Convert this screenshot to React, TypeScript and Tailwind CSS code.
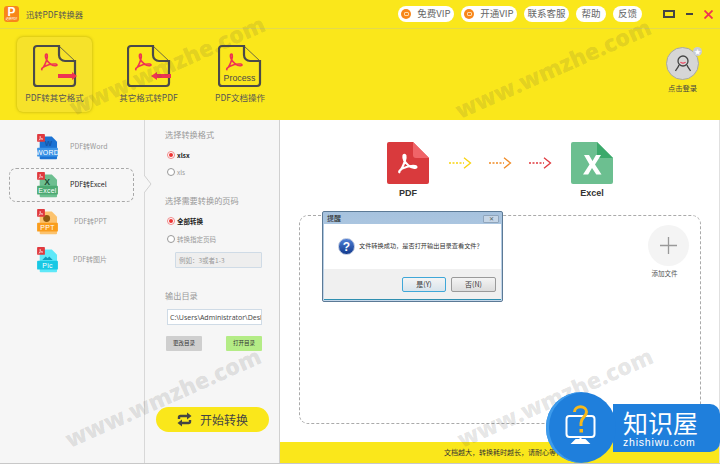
import type { ReactNode } from "react";

const font = { fontFamily: '"Noto Sans CJK SC", "Liberation Sans", sans-serif' };
const latin = { fontFamily: '"Liberation Sans", sans-serif' };

const acrobat =
  "M4 20.5c1.500-1 3.500-4.500 5-9 .7-2.200 1-4 .6-5.500-.3-1-1.600-1-1.800.2-.4 2.600 1.600 6.400 4.400 8.800 2 1.700 5 2.900 7 2.300 1-.3.7-1.500-.5-1.600-3-.3-8 .5-11.500 2.200-2.200 1.100-3.900 3-3.200 3.600z";

function AcrobatMark({ x, y, size, color, width = 2 }: { x: number; y: number; size: number; color: string; width?: number }) {
  return (
    <g transform={`translate(${x} ${y}) scale(${size / 24})`}>
      <path d={acrobat} fill="none" stroke={color} strokeWidth={width} strokeLinejoin="round" />
    </g>
  );
}

function ToolIcon({ kind }: { kind: "out" | "in" | "process" }) {
  return (
    <svg width="44" height="44" viewBox="0 0 44 44" className="block">
      <path d="M26 2H4a3 3 0 0 0-3 3v34a3 3 0 0 0 3 3h35a3 3 0 0 0 3-3V17H32a6 6 0 0 1-6-6z" fill="none" stroke="#4a4a4a" strokeWidth="2.200" />
      <path d="M26 2l16 15" fill="none" stroke="#4a4a4a" strokeWidth="0.800" />
      <AcrobatMark x={5} y={5} size={23} color="#ef3352" width={1.700} />
      {kind === "out" && <path d="M25 30h14v-2l5 4-5 4v-2H25z" fill="#ef3352" />}
      {kind === "in" && <path d="M44 30H30v-2l-6 4 6 4v-2h14z" fill="#ef3352" />}
      {kind === "process" && (
        <text x="21.500" y="37" textAnchor="middle" fontSize="8.800" fill="#4a4a4a" fontFamily="Liberation Sans, sans-serif">
          Process
        </text>
      )}
    </svg>
  );
}

function Pill({ children, vip, width }: { children: ReactNode; vip?: boolean; width: string }) {
  return (
    <div className={`flex h-4 items-center justify-center rounded-full bg-white text-[9.500px] leading-none text-[#666] ${width}`}>
      {vip && (
        <span className="mr-[6px] flex h-[10px] w-[10px] items-center justify-center rounded-full bg-[#f8861a]">
          <span className="h-[4px] w-[5px] rounded-[1px] border border-[#ffd9a8]" />
        </span>
      )}
      {children}
    </div>
  );
}

function FormatIcon({ color, light, label, glyph }: { color: string; light: string; label: string; glyph: ReactNode }) {
  return (
    <svg width="23" height="26" viewBox="0 0 26 30" className="block">
      <path d="M4 3h14l6 6v19a1 1 0 0 1-1 1H5a1 1 0 0 1-1-1z" fill={light} />
      {glyph}
      <rect x="1" y="16" width="24" height="10" rx="1" fill={color} />
      <text x="13" y="24.500" textAnchor="middle" fontSize="8" fill="#fff" fontFamily="Liberation Sans, sans-serif" letterSpacing="0.300">
        {label}
      </text>
      <rect x="1" y="0" width="9" height="9" rx="1" fill="#e0393e" />
      <AcrobatMark x={2} y={1} size={7} color="#fff" width={2} />
    </svg>
  );
}

function FormatRow({ label, active, left, icon }: { label: string; active?: boolean; left: string; icon: ReactNode }) {
  return (
    <div className="relative h-[33px]">
      {active && <div className="absolute left-[9px] top-[-1px] h-[34px] w-[125px] rounded-[7px] border border-dashed border-[#a8a8a8]" />}
      <div className="absolute left-[36px] top-[3px]">{icon}</div>
      <span className={`absolute top-[11px] text-[7px] leading-[9px] whitespace-nowrap ${active ? "text-[#222]" : "text-[#999]"} ${left}`}>{label}</span>
    </div>
  );
}

function Radio({ on, label, bold }: { on?: boolean; label: string; bold?: boolean }) {
  return (
    <div className="flex items-center gap-[2px]">
      <span className={`flex h-[8px] w-[8px] items-center justify-center rounded-full border ${on ? "border-[#f08a8a]" : "border-[#999]"} bg-white`}>
        {on && <span className="h-[4px] w-[4px] rounded-full bg-[#e33]" />}
      </span>
      <span className={`text-[6.500px] leading-none ${bold ? "font-bold text-[#222]" : "text-[#999]"}`}>{label}</span>
    </div>
  );
}

function Arrow({ color }: { color: string }) {
  return (
    <svg width="23" height="12" viewBox="0 0 23 12" className="block">
      <path d="M0 6h15" stroke={color} strokeWidth="1.300" strokeDasharray="2 1.500" fill="none" />
      <path d="M15 .8 21.500 6 15 11.200" stroke={color} strokeWidth="1.300" fill="none" />
    </svg>
  );
}

function Watermark({ className }: { className: string }) {
  return (
    <div
      className={`pointer-events-none absolute z-30 w-[226px] -rotate-[24deg] text-center text-[23px] leading-none font-extrabold whitespace-nowrap text-[#444]/15 ${className}`}
      style={{ fontFamily: '"Open Sans", sans-serif' }}
    >
      www.wmzhe.com
    </div>
  );
}

function Dialog() {
  return (
    <div className="absolute left-[322px] top-[211px] z-20 flex h-[91px] w-[181px] flex-col rounded-[2px] border border-[#5c7a96] bg-gradient-to-b from-[#a6c2de] to-[#c6d8ea] px-[1px] pb-[1px]">
      <div className="flex h-[12px] shrink-0 items-center justify-between pl-[3px] pr-[2px]">
        <span className="text-[7px] leading-none text-[#222]">提醒</span>
        <span className="mt-[1px] flex h-[8px] w-[16px] items-center justify-center rounded-[1px] border border-[#8fa5bc] bg-[#c5d5e6] text-[6px] leading-none text-[#566]">✕</span>
      </div>
      <div className="flex flex-1 flex-col border-b border-[#2f8fb0] bg-white">
        <div className="flex flex-1 items-center gap-[4px] pl-[14px]">
          <span className="flex h-[17px] w-[17px] items-center justify-center rounded-full border border-[#b8c4dc] bg-gradient-to-b from-[#4f7fd6] to-[#123a8e] text-[12px] leading-none font-bold text-white" style={latin}>?</span>
          <span className="text-[6.200px] leading-none whitespace-nowrap text-[#333]">文件转换成功，是否打开输出目录查看文件？</span>
        </div>
        <div className="flex h-[30px] items-center justify-end gap-[5px] bg-[#f0f0f0] pr-[5px]">
          <span className="flex h-[15px] w-[44px] items-center justify-center rounded-[2px] border border-[#3fa7d8] bg-gradient-to-b from-[#f4f4f4] to-[#d8e4ec] text-[7px] leading-none text-[#333]">是(Y)</span>
          <span className="flex h-[15px] w-[45px] items-center justify-center rounded-[2px] border border-[#9a9a9a] bg-gradient-to-b from-[#f4f4f4] to-[#dcdcdc] text-[7px] leading-none text-[#333]">否(N)</span>
        </div>
      </div>
    </div>
  );
}

export default function App() {
  return (
    <div className="relative flex h-[464px] w-[720px] flex-col overflow-hidden bg-white" style={font}>
      <header className="flex h-[120px] shrink-0 flex-col bg-[#fae71b]">
        <div className="flex h-[29px] shrink-0 items-center border-b border-[#e3d94e] pl-[4px] pr-[7px]">
          <div className="flex h-[16px] w-[15px] flex-col items-center rounded-[3px] bg-[#f8861a]">
            <span className="h-[12px] text-[12px] leading-[12px] font-bold text-white" style={latin}>P</span>
            <span className="text-[3px] leading-[3px] whitespace-nowrap text-white">迅转PDF</span>
          </div>
          <span className="ml-[7px] text-[8.300px] leading-none text-[#555]">迅转PDF转换器</span>
          <div className="ml-auto flex items-center gap-[7px]">
            <Pill vip width="w-[56px]">免费VIP</Pill>
            <Pill vip width="w-[56px]">开通VIP</Pill>
            <Pill width="w-[45px]">联系客服</Pill>
            <Pill width="w-[30px]">帮助</Pill>
            <Pill width="w-[29px]">反馈</Pill>
          </div>
          <div className="ml-[21px] flex items-center gap-[11px]">
            <span className="h-[8px] w-[12px] border-[2px] border-[#444]" />
            <span className="h-[2px] w-[7px] bg-[#444]" />
            <svg width="9" height="9" viewBox="0 0 9 9" className="block">
              <path d="M.5.5l8 8M8.500.5l-8 8" stroke="#ef3352" strokeWidth="1.800" />
            </svg>
          </div>
        </div>
        <div className="flex flex-1 items-start pl-[17px] pr-[21px] pt-[8px]">
          <div className="flex h-[75px] w-[75px] flex-col items-center rounded-[6px] bg-[#f6e22a] pt-[7px] shadow-[0_0_3px_rgba(120,110,0,0.5)]">
            <ToolIcon kind="out" />
            <span className="mt-[5px] text-[8.500px] leading-none whitespace-nowrap text-[#555]">PDF转其它格式</span>
          </div>
          <div className="ml-[19px] flex w-[75px] flex-col items-center pt-[7px]">
            <ToolIcon kind="in" />
            <span className="mt-[5px] text-[8.500px] leading-none whitespace-nowrap text-[#555]">其它格式转PDF</span>
          </div>
          <div className="ml-[19px] flex w-[70px] flex-col items-center pt-[7px]">
            <ToolIcon kind="process" />
            <span className="mt-[5px] text-[8.500px] leading-none whitespace-nowrap text-[#555]">PDF文档操作</span>
          </div>
          <div className="ml-auto flex flex-col items-center pt-[10px]">
            <div className="relative">
              <div className="flex h-[33px] w-[33px] items-center justify-center rounded-full border border-[#a8a8a0] bg-[#d6d6d6]">
                <svg width="18" height="20" viewBox="0 0 18 20" className="block">
                  <circle cx="9" cy="7" r="5" fill="none" stroke="#444" strokeWidth="1.300" />
                  <path d="M6.500 8c1 1.500 4 1.500 5 0" stroke="#ef3352" strokeWidth="1.200" fill="none" />
                  <path d="M5 11c-1 3-2.500 4-3.500 6M13 11c1 3 2.500 4 3.500 6" stroke="#444" strokeWidth="1.300" fill="none" />
                </svg>
              </div>
              <div className="absolute right-[-3px] top-0 flex h-[9px] w-[9px] items-center justify-center rounded-full bg-[#c8ccd4] text-[7px] leading-none text-white">★</div>
            </div>
            <span className="mt-[5px] text-[7.300px] leading-none text-[#444]">点击登录</span>
          </div>
        </div>
      </header>

      <main className="flex min-h-0 flex-1">
        <aside className="flex w-[145px] shrink-0 flex-col gap-[4.500px] border-r border-[#d8d8d8] bg-[#f6f6f6] pt-[11px]">
          <FormatRow
            label="PDF转Word"
            left="left-[70px]"
            icon={
              <FormatIcon
                color="#3d95e8"
                light="#1c73d3"
                label="WORD"
                glyph={<text x="14" y="14" textAnchor="middle" fontSize="9" fontWeight="700" fill="#1556a8" fontFamily="Liberation Sans, sans-serif">W</text>}
              />
            }
          />
          <FormatRow
            label="PDF转Excel"
            active
            left="left-[70px]"
            icon={
              <FormatIcon
                color="#4caa72"
                light="#6dbf90"
                label="Excel"
                glyph={<text x="12.500" y="15" textAnchor="middle" fontSize="10" fontWeight="700" fill="#1d4a30" fontFamily="Liberation Sans, sans-serif">X</text>}
              />
            }
          />
          <FormatRow
            label="PDF转PPT"
            left="left-[74px]"
            icon={
              <FormatIcon
                color="#fa9d1c"
                light="#fcc36e"
                label="PPT"
                glyph={<circle cx="12" cy="11" r="4" fill="#8f5a10" />}
              />
            }
          />
          <FormatRow
            label="PDF转图片"
            left="left-[73px]"
            icon={
              <FormatIcon
                color="#18c8e4"
                light="#5ee8f8"
                label="Pic"
                glyph={<path d="M7 15l4-4 2 2 2-2 4 4z" fill="#0f9cbc" />}
              />
            }
          />
        </aside>

        <section className="relative flex w-[135px] shrink-0 flex-col border-r border-[#d0d0d0] bg-[#f6f6f6] pl-[20px] pt-[10px]">
          <div className="absolute left-[-1px] top-[55px] h-[18px] w-[8px] bg-[#f6f6f6]">
            <svg width="8" height="18" viewBox="0 0 8 18" className="block">
              <path d="M0 0l7 9-7 9" stroke="#d0d0d0" fill="none" />
            </svg>
          </div>
          <div className="text-[8.200px] leading-[8px] text-[#999]">选择转换格式</div>
          <div className="mt-[13px] ml-[2px]"><Radio on bold label="xlsx" /></div>
          <div className="mt-[9px] ml-[2px]"><Radio label="xls" /></div>
          <div className="mt-[20px] text-[8.200px] leading-[8px] text-[#999]">选择需要转换的页码</div>
          <div className="mt-[13px] ml-[2px]"><Radio on bold label="全部转换" /></div>
          <div className="mt-[10px] ml-[2px]"><Radio label="转换指定页码" /></div>
          <div className="mt-[9px] ml-[10px] flex h-[16px] w-[87px] items-center rounded-[1px] border border-[#cfdbe6] bg-[#eeeeee] pl-[3px] text-[6.500px] leading-none text-[#999]">例如：3或者1-3</div>
          <div className="mt-[23px] text-[8.200px] leading-[8px] text-[#999]">输出目录</div>
          <div className="mt-[10px] ml-[2px] flex h-[16px] w-[95px] items-center overflow-hidden border border-[#cfdbe6] bg-white pl-[2px] text-[7px] leading-none whitespace-nowrap text-[#444]" style={{ fontFamily: '"Open Sans", sans-serif' }}>C:\Users\Administrator\Desl</div>
          <div className="mt-[11px] ml-[1px] flex w-[96px] justify-between">
            <span className="flex h-[15px] w-[36px] items-center justify-center rounded-[1px] bg-[#cfcfcf] text-[5.500px] leading-none text-[#333]">更改目录</span>
            <span className="flex h-[15px] w-[36px] items-center justify-center rounded-[1px] bg-[#b4ec86] text-[5.500px] leading-none text-[#333]">打开目录</span>
          </div>
          <div className="mt-[56px] ml-[-9px] flex h-[25px] w-[113px] items-center justify-center gap-[8px] rounded-full bg-[#fae71b] text-[12px] leading-none text-[#444]">
            <svg width="15" height="15" viewBox="0 0 15 15" className="block">
              <path d="M2 7V5.500a1.500 1.500 0 0 1 1.500-1.500H11M13 8v1.500a1.500 1.500 0 0 1-1.500 1.500H4" fill="none" stroke="#444" strokeWidth="2.400" />
              <path d="M10 .5l4.500 3.500-4.500 3.500zM5 7.500L.5 11 5 14.500z" fill="#444" />
            </svg>
            开始转换
          </div>
        </section>

        <section className="relative flex min-w-0 flex-1 flex-col border-r border-[#e0e0e0] bg-white pt-[22px]">
          <div className="ml-[107px] flex items-start">
            <div className="flex w-[42px] flex-col items-center">
              <svg width="42" height="42" viewBox="0 0 42 42" className="block">
                <path d="M2 0h24l16 16v24a2 2 0 0 1-2 2H2a2 2 0 0 1-2-2V2a2 2 0 0 1 2-2z" fill="#d93a3d" />
                <path d="M26 0l16 16H29a3 3 0 0 1-3-3z" fill="#f06468" />
                <AcrobatMark x={8} y={7} size={26} color="#fff" width={2} />
              </svg>
              <span className="mt-[5px] text-[9px] leading-[9px] font-bold text-[#333]" style={latin}>PDF</span>
            </div>
            <div className="mt-[15px] ml-[20px] flex gap-[17px]">
              <Arrow color="#f9d30e" />
              <Arrow color="#f08a24" />
              <Arrow color="#e0393e" />
            </div>
            <div className="ml-[19px] flex w-[42px] flex-col items-center">
              <svg width="42" height="42" viewBox="0 0 42 42" className="block">
                <path d="M2 0h24l16 16v24a2 2 0 0 1-2 2H2a2 2 0 0 1-2-2V2a2 2 0 0 1 2-2z" fill="#6cbf90" />
                <path d="M26 0l16 16H29a3 3 0 0 1-3-3z" fill="#3ba96b" />
                <path d="M13 13h5l3.500 6 3.500-6h5l-6 9.500 6.500 10h-5.200L21 26l-3.800 6.500H12l6.500-10z" fill="#fff" />
              </svg>
              <span className="mt-[5px] text-[9px] leading-[9px] font-bold text-[#333]" style={latin}>Excel</span>
            </div>
          </div>
          <div className="mt-[17px] ml-[19px] flex h-[209px] w-[402px] flex-col items-end rounded-[9px] border border-dashed border-[#aaaaaa] pr-[11px] pt-[9px]">
            <div className="flex flex-col items-center">
              <div className="flex h-[41px] w-[41px] items-center justify-center rounded-full bg-[#f4f4f4]">
                <svg width="17" height="17" viewBox="0 0 17 17" className="block">
                  <path d="M8.500 0v17M0 8.500h17" stroke="#999" strokeWidth="1.300" />
                </svg>
              </div>
              <span className="mt-[4px] mr-[8px] text-[6.500px] leading-none text-[#555]">添加文件</span>
            </div>
          </div>
          <div className="mt-auto flex h-[21px] items-center bg-[#fae71b] pl-[164px] text-[7px] leading-none whitespace-nowrap text-[#333]">文档越大，转换耗时越长，请耐心等待</div>
        </section>
      </main>
      <div className="h-[1px] shrink-0 bg-[#c8c8c8]" />

      <Dialog />

      <div className="absolute left-[546px] top-[392px] z-40 flex items-center">
        <div className="relative z-10 flex h-[71px] w-[70px] items-center justify-center rounded-full bg-[#1f7fdc] pb-[6px] shadow-[inset_3px_0_0_#3d9bec]">
          <svg width="32" height="42" viewBox="0 0 32 42" className="block">
            <rect x="1.500" y="12" width="28" height="21" rx="3" fill="none" stroke="#fff" strokeWidth="2" />
            <path d="M15.500 33v4M8 39h15l-3-3h-9z" stroke="#fff" strokeWidth="2" fill="#fff" />
            <path d="M9.500 8c0-7 12-7 12 0 0 5-5.500 5-5.500 11v3" stroke="#f6b91c" strokeWidth="3" fill="none" />
            <rect x="14.500" y="25" width="3.500" height="3.500" fill="#f6b91c" />
          </svg>
        </div>
        <div className="ml-[-3px] flex h-[48px] w-[107px] flex-col items-start rounded-r-[10px] bg-[#1f7fdc] pl-[10px] pt-[3px] text-white">
          <span className="text-[25px] leading-[30px]">知识屋</span>
          <span className="text-[10.500px] leading-[10px] tracking-[0.8px]" style={latin}>zhishiwu.com</span>
        </div>
      </div>

      <Watermark className="left-[54px] top-[54px]" />
      <Watermark className="left-[440px] top-[57px]" />
      <Watermark className="left-[50px] top-[386px]" />
      <Watermark className="left-[442px] top-[386px]" />
    </div>
  );
}
